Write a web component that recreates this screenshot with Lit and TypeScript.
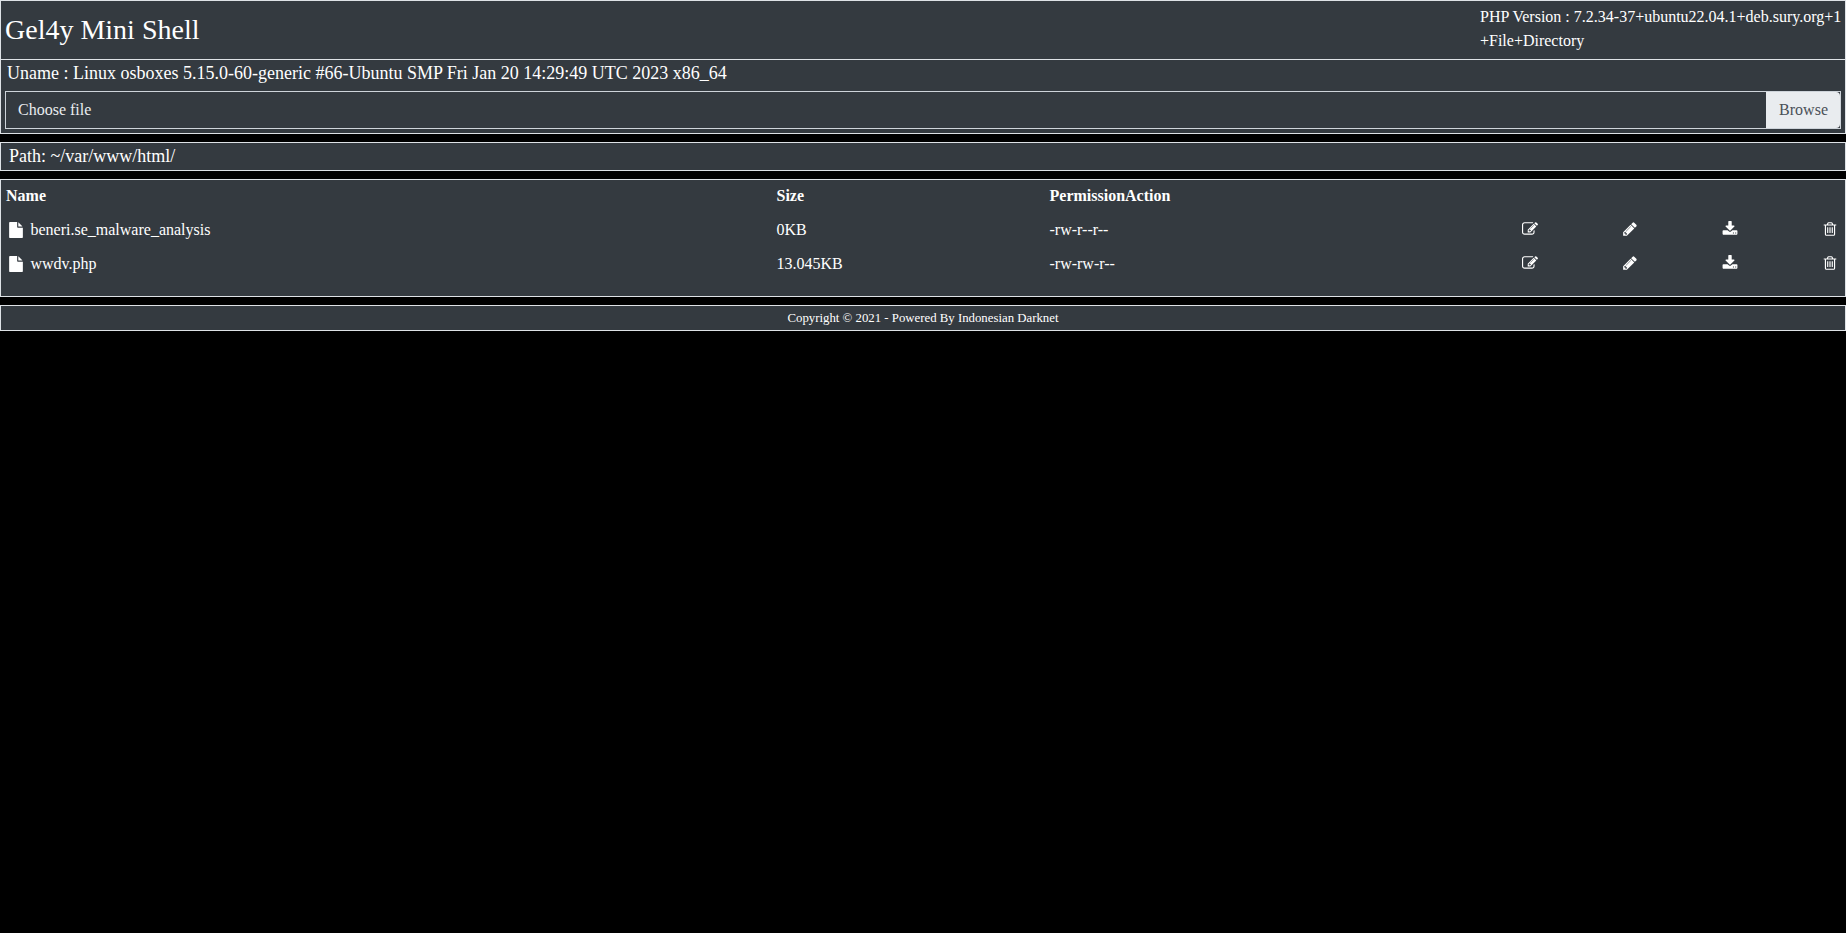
import { LitElement, html, css, svg } from "lit";
import { customElement } from "lit/decorators.js";

const ICONS = {
  file: "M1152 512v-472q22 14 36 28l408 408q14 14 28 36h-472zm-128 32q0 40 28 68t68 28h544v1056q0 40-28 68t-68 28h-1344q-40 0-68-28t-28-68v-1600q0-40 28-68t68-28h800v544z",
  edit: "M888 1184l116-116-152-152-116 116v56h96v96h56zm440-720q-16-16-33 1l-350 350q-17 17-1 33t33-1l350-350q17-17 1-33zm80 594v190q0 119-84.5 203.5t-203.5 84.5h-832q-119 0-203.5-84.5t-84.5-203.5v-832q0-119 84.5-203.5t203.5-84.5h832q63 0 117 25 15 7 18 23 3 17-9 29l-49 49q-14 14-32 8-23-6-45-6h-832q-66 0-113 47t-47 113v832q0 66 47 113t113 47h832q66 0 113-47t47-113v-126q0-13 9-22l64-64q15-15 35-7t20 29zm-96-738l288 288-672 672h-288v-288zm444 132l-92 92-288-288 92-92q28-28 68-28t68 28l152 152q28 28 28 68t-28 68z",
  pencil: "M491 1536l91-91-235-235-91 91v107h128v128h107zm523-928q0-22-22-22-10 0-17 7l-542 542q-7 7-7 17 0 22 22 22 10 0 17-7l542-542q7-7 7-17zm-54-192l416 416-832 832h-416v-416zm683 96q0 53-37 90l-166 166-416-416 166-165q36-38 90-38 53 0 91 38l235 234q37 39 37 91z",
  download: "M1344 1344q0-26-19-45t-45-19-45 19-19 45 19 45 45 19 45-19 19-45zm256 0q0-26-19-45t-45-19-45 19-19 45 19 45 45 19 45-19 19-45zm128-224v320q0 40-28 68t-68 28h-1472q-40 0-68-28t-28-68v-320q0-40 28-68t68-28h465l135 136q58 56 136 56t136-56l136-136h464q40 0 68 28t28 68zm-325-569q17 41-14 70l-448 448q-18 19-45 19t-45-19l-448-448q-31-29-14-70 17-39 59-39h256v-448q0-26 19-45t45-19h256q26 0 45 19t19 45v448h256q42 0 59 39z",
  trash: "M704 736v576q0 14-9 23t-23 9h-64q-14 0-23-9t-9-23v-576q0-14 9-23t23-9h64q14 0 23 9t9 23zm256 0v576q0 14-9 23t-23 9h-64q-14 0-23-9t-9-23v-576q0-14 9-23t23-9h64q14 0 23 9t9 23zm256 0v576q0 14-9 23t-23 9h-64q-14 0-23-9t-9-23v-576q0-14 9-23t23-9h64q14 0 23 9t9 23zm128 724v-948h-896v948q0 22 7 40.5t14.5 27 10.5 8.5h832q3 0 10.5-8.5t14.5-27 7-40.5zm-672-1076h448l-48-117q-7-9-17-11h-317q-10 2-17 11zm928 32v64q0 14-9 23t-23 9h-96v948q0 83-47 143.5t-113 60.5h-832q-66 0-113-60.5t-47-141.5v-950h-96q-14 0-23-9t-9-23v-64q0-14 9-23t23-9h309l70-167q15-37 54-63t79-26h320q40 0 79 26t54 63l70 167h309q14 0 23 9t9 23z",
};

const icon = (name: keyof typeof ICONS) =>
  html`<svg class="icon" viewBox="0 0 1792 1792" aria-hidden="true">${svg`<path fill="currentColor" d=${ICONS[name]}></path>`}</svg>`;

const FILES = [
  { name: "beneri.se_malware_analysis", size: "0KB", perm: "-rw-r--r--" },
  { name: "wwdv.php", size: "13.045KB", perm: "-rw-rw-r--" },
];

@customElement("app-root")
export class AppRoot extends LitElement {
  static styles = css`
    :host {
      display: block;
      min-height: 933px;
      background: #000;
      color: #fff;
      font-family: "Liberation Serif", "Times New Roman", serif;
      font-size: 16px;
      line-height: 24px;
    }
    .box {
      background: #343a40;
      border: 1px solid #dee2e6;
    }
    .head {
      height: 60px;
      box-sizing: border-box;
      display: flex;
      justify-content: space-between;
    }
    .title {
      margin: 0;
      padding-left: 4px;
      font-size: 28px;
      font-weight: 400;
      line-height: 58px;
    }
    .php {
      width: 365px;
      padding-top: 4px;
      white-space: nowrap;
    }
    .upload {
      height: 75px;
      box-sizing: border-box;
      padding: 0 4px;
      margin-top: -1px;
    }
    .uname {
      padding-left: 2px;
      font-size: 18px;
      line-height: 27px;
      height: 27px;
      margin-top: -3px;
      padding-top: 3px;
    }
    .picker {
      display: flex;
      justify-content: space-between;
      height: 38px;
      box-sizing: border-box;
      margin-top: 4px;
      border: 1px solid #ced4da;
      color: #e9ecef;
    }
    .picker span {
      padding: 6px 12px;
      height: 36px;
      box-sizing: border-box;
    }
    .picker .browse {
      padding-left: 13px;
      background: #e9ecef;
      color: #495057;
      border-radius: 0 4px 4px 0;
    }
    .path {
      margin-top: 8px;
      height: 29px;
      box-sizing: border-box;
      padding-left: 8px;
      font-size: 18px;
      line-height: 27px;
    }
    .files {
      margin-top: 8px;
      height: 118px;
      box-sizing: border-box;
      display: grid;
      grid-template-columns: 775.5px 273px 75.5px 396.5px 100px 100px 100px 1fr;
      grid-template-rows: 33px 34px 34px;
      align-content: start;
    }
    .row {
      display: contents;
    }
    .cell {
      display: flex;
      align-items: center;
      gap: 6.5px;
    }
    .th {
      font-weight: 700;
      height: 31px;
    }
    .name {
      padding-left: 5px;
    }
    .perm {
      grid-column: span 2;
    }
    .action {
      grid-column: span 5;
    }
    .namecell {
      padding-left: 7px;
    }
    .icon {
      width: 16px;
      height: 16px;
      flex: none;
      color: #fff;
    }
    .tool .icon {
      margin-bottom: 2px;
    }
    .foot {
      margin-top: 8px;
      height: 26px;
      box-sizing: border-box;
      text-align: center;
      font-size: 12.8px;
      line-height: 25px;
    }
  `;

  render() {
    return html`
      <div class="box head">
        <h3 class="title">Gel4y Mini Shell</h3>
        <div class="php">PHP Version : 7.2.34-37+ubuntu22.04.1+deb.sury.org+1<br />+File+Directory</div>
      </div>
      <div class="box upload">
        <div class="uname">Uname : Linux osboxes 5.15.0-60-generic #66-Ubuntu SMP Fri Jan 20 14:29:49 UTC 2023 x86_64</div>
        <div class="picker"><span>Choose file</span><span class="browse">Browse</span></div>
      </div>
      <div class="box path">Path: ~/var/www/html/</div>
      <div class="box files">
        <div class="cell th name">Name</div>
        <div class="cell th">Size</div>
        <div class="cell th">Permission</div>
        <div class="cell th action">Action</div>
        ${FILES.map(
          (f) => html`
            <div class="row">
              <div class="cell namecell">${icon("file")}<span>${f.name}</span></div>
              <div class="cell">${f.size}</div>
              <div class="cell perm">${f.perm}</div>
              <div class="cell tool">${icon("edit")}</div>
              <div class="cell tool">${icon("pencil")}</div>
              <div class="cell tool">${icon("download")}</div>
              <div class="cell tool">${icon("trash")}</div>
            </div>
          `
        )}
      </div>
      <div class="box foot">Copyright © 2021 - Powered By Indonesian Darknet</div>
    `;
  }
}
